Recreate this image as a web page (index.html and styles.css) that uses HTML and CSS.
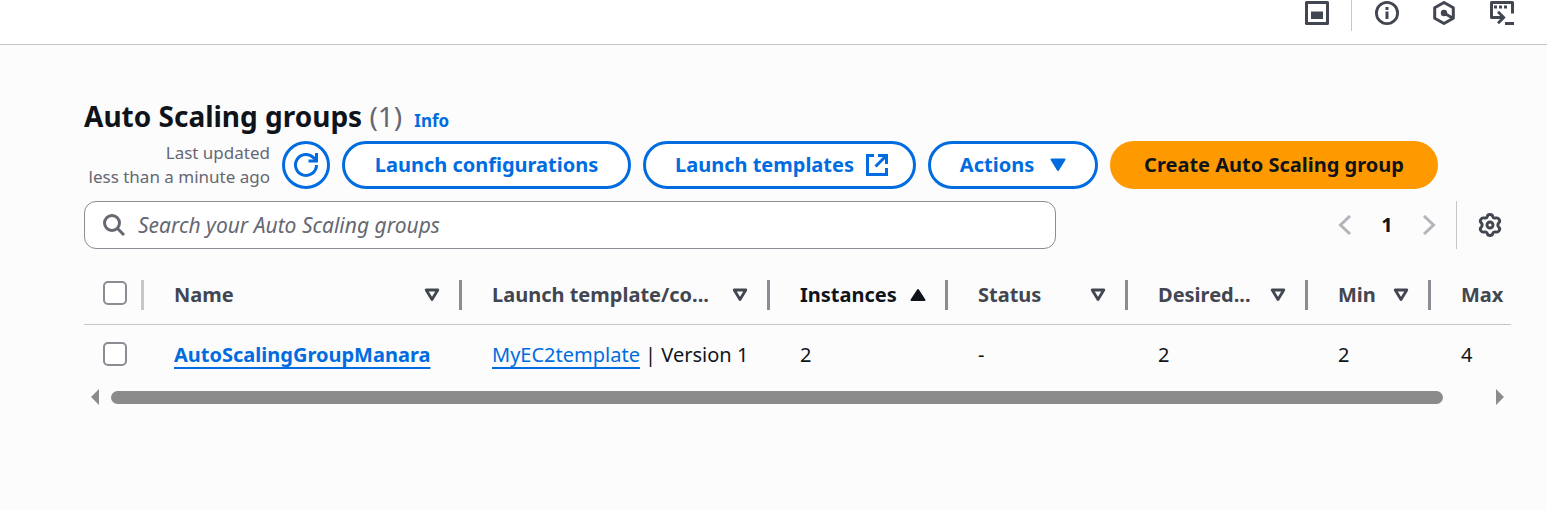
FILE: index.html
```html
<!DOCTYPE html>
<html lang="en">
<head>
<meta charset="utf-8">
<title>Auto Scaling groups</title>
<link rel="stylesheet" href="styles.css">
</head>
<body>
<header class="topbar">
  <button class="icon-btn panel-btn" aria-label="Split panel"><svg width="24" height="24" viewBox="0 0 24 24"><path d="M1.500 1.500h21v21h-21z" fill="none" stroke="currentColor" stroke-width="3" stroke-linejoin="round"/><path d="M6 10.500h12V18H6z" fill="currentColor"/></svg></button>
  <span class="topbar-divider"></span>
  <button class="icon-btn" aria-label="Information"><svg width="24" height="24" viewBox="0 0 24 24"><circle cx="12" cy="12" r="10.600" fill="none" stroke="currentColor" stroke-width="2.800"/><path d="M10.500 6h3v3h-3zM10.500 10.500h3V18h-3z" fill="currentColor"/></svg></button>
  <button class="icon-btn" aria-label="Diagnostics"><svg width="24" height="24" viewBox="0 0 24 24"><path d="M12 1.500l9.300 5.200v10.600L12 22.500l-9.300-5.200V6.700z" fill="none" stroke="currentColor" stroke-width="3" stroke-linejoin="round"/><circle cx="12" cy="12" r="3.200" fill="currentColor"/><path d="M12 12l8.500 5" stroke="currentColor" stroke-width="2.800"/></svg></button>
  <button class="icon-btn" aria-label="CloudShell"><svg width="26" height="24" viewBox="0 0 26 24"><path d="M6 16.500H2.500v-15h21V12.500" fill="none" stroke="currentColor" stroke-width="3" stroke-linejoin="round"/><path d="M5 4.500h3v3H5zM10 4.500h3v3h-3zM15 4.500h3v3h-3z" fill="currentColor"/><path d="M6 16.500h8M9 10.800l5.700 5.700L9 22.200" fill="none" stroke="currentColor" stroke-width="2.800"/><path d="M16 21h9v3h-9z" fill="currentColor"/></svg></button>
</header>

<main class="content">
  <div class="title-row">
    <h1 class="title">Auto Scaling groups <span class="count">(1)</span></h1>
    <a class="info" href="#">Info</a>
  </div>

  <div class="actions">
    <p class="updated">Last updated<br>less than a minute ago</p>
    <button class="btn btn-round" aria-label="Refresh"><svg width="26" height="26" viewBox="0 0 26 26" fill="none" stroke="currentColor" stroke-width="3"><path d="M23.500 13a10.500 10.500 0 1 1-3-7.400L23 8"/><path d="M23.500 1v8h-8"/></svg></button>
    <button class="btn btn-config">Launch configurations</button>
    <button class="btn btn-templates">Launch templates <svg width="22" height="22" viewBox="0 0 22 22" fill="none" stroke="currentColor" stroke-width="3"><path d="M8 1.500H1.500v19h19V14"/><path d="M12 1.500h8.500V10M20 2L9.500 12.500"/></svg></button>
    <button class="btn btn-menu">Actions <svg width="16" height="14" viewBox="0 0 16 14"><path d="M1.500 1.500h13L8 12z" fill="currentColor" stroke="currentColor" stroke-width="2" stroke-linejoin="round"/></svg></button>
    <button class="btn btn-primary">Create Auto Scaling group</button>
  </div>

  <div class="tools">
    <label class="search">
      <svg width="22" height="22" viewBox="0 0 22 22" fill="none" stroke="currentColor" stroke-width="3"><circle cx="9" cy="9" r="7.500"/><path d="M14.300 14.300l6.700 6.700"/></svg>
      <input class="search-input" type="search" placeholder="Search your Auto Scaling groups" aria-label="Search your Auto Scaling groups">
    </label>
    <nav class="pager" aria-label="Pagination">
      <button class="icon-btn page-arrow" aria-label="Previous page"><svg width="14" height="20" viewBox="0 0 14 20" fill="none" stroke="currentColor" stroke-width="3"><path d="M12 1l-9.500 9L12 19"/></svg></button>
      <button class="icon-btn page-number" aria-current="page">1</button>
      <button class="icon-btn page-arrow" aria-label="Next page"><svg width="14" height="20" viewBox="0 0 14 20" fill="none" stroke="currentColor" stroke-width="3"><path d="M2 1l9.500 9L2 19"/></svg></button>
    </nav>
    <div class="prefs">
      <button class="icon-btn" aria-label="Preferences"><svg width="24" height="24" viewBox="0 0 24 24" fill="none" stroke="currentColor" stroke-width="2.900" stroke-linejoin="round"><path d="M9.300 3.500Q9.600 1.500 12 1.500T14.700 3.500Q15.300 5.600 17.700 5Q20 4.400 21.200 6.500T20.700 9.800Q19 12 20.700 14.200Q22.400 15.400 21.200 17.500T17.700 19Q15.300 18.400 14.700 20.500Q14.400 22.500 12 22.500T9.300 20.500Q8.700 18.400 6.300 19Q4 19.600 2.800 17.500T3.300 14.200Q5 12 3.300 9.800Q1.600 8.600 2.800 6.500T6.300 5Q8.700 5.600 9.300 3.500z"/><circle cx="12" cy="12" r="3"/></svg></button>
    </div>
  </div>

  <table class="grid">
    <colgroup><col class="c-check"><col class="c-name"><col class="c-template"><col class="c-instances"><col class="c-status"><col class="c-desired"><col class="c-min"><col class="c-max"></colgroup>
    <thead>
      <tr>
        <th class="check"><div class="head"><input class="box" type="checkbox" aria-label="Select all groups"><span class="rule rule-light"></span></div></th>
        <th><div class="head"><span class="label">Name</span><svg class="sort" width="16" height="14" viewBox="0 0 16 14"><path d="M2.200 2h11.600L8 11.500z" fill="none" stroke="currentColor" stroke-width="2.800" stroke-linejoin="round"/></svg><span class="rule"></span></div></th>
        <th><div class="head"><span class="label">Launch template/co...</span><svg class="sort" width="16" height="14" viewBox="0 0 16 14"><path d="M2.200 2h11.600L8 11.500z" fill="none" stroke="currentColor" stroke-width="2.800" stroke-linejoin="round"/></svg><span class="rule"></span></div></th>
        <th class="sorted" aria-sort="ascending"><div class="head"><span class="label">Instances</span><svg class="sort" width="16" height="14" viewBox="0 0 16 14"><path d="M1.500 12h13L8 2z" fill="currentColor" stroke="currentColor" stroke-width="2" stroke-linejoin="round"/></svg><span class="rule"></span></div></th>
        <th><div class="head"><span class="label">Status</span><svg class="sort" width="16" height="14" viewBox="0 0 16 14"><path d="M2.200 2h11.600L8 11.500z" fill="none" stroke="currentColor" stroke-width="2.800" stroke-linejoin="round"/></svg><span class="rule"></span></div></th>
        <th><div class="head"><span class="label">Desired...</span><svg class="sort" width="16" height="14" viewBox="0 0 16 14"><path d="M2.200 2h11.600L8 11.500z" fill="none" stroke="currentColor" stroke-width="2.800" stroke-linejoin="round"/></svg><span class="rule"></span></div></th>
        <th><div class="head"><span class="label">Min</span><svg class="sort" width="16" height="14" viewBox="0 0 16 14"><path d="M2.200 2h11.600L8 11.500z" fill="none" stroke="currentColor" stroke-width="2.800" stroke-linejoin="round"/></svg><span class="rule"></span></div></th>
        <th><div class="head"><span class="label">Max</span></div></th>
      </tr>
    </thead>
    <tbody>
      <tr>
        <td class="check"><div class="head"><input class="box" type="checkbox" aria-label="Select AutoScalingGroupManara"></div></td>
        <td><a class="link link-strong" href="#">AutoScalingGroupManara</a></td>
        <td><a class="link" href="#">MyEC2template</a> | Version 1</td>
        <td>2</td>
        <td>-</td>
        <td>2</td>
        <td>2</td>
        <td>4</td>
      </tr>
    </tbody>
  </table>

  <div class="scrollbar">
    <svg width="8" height="16" viewBox="0 0 8 16"><path d="M8 0v16L0 8z" fill="currentColor"/></svg>
    <div class="track"><div class="thumb"></div></div>
    <svg width="8" height="16" viewBox="0 0 8 16"><path d="M0 0v16l8-8z" fill="currentColor"/></svg>
  </div>
</main>
</body>
</html>
```

FILE: styles.css
```css
* { box-sizing: border-box; }

body {
  margin: 0;
  background: #fcfcfd;
  color: #0f141a;
  font-family: "Noto Sans", "Open Sans", sans-serif;
  font-size: 20px;
  line-height: 30px;
}

button, input { font: inherit; }
svg { display: block; flex: none; }

.topbar {
  display: flex;
  justify-content: flex-end;
  align-items: flex-start;
  gap: 33px;
  height: 45px;
  padding-right: 32px;
  background: #fff;
  border-bottom: 1px solid #c6c6cd;
}

.icon-btn {
  display: flex;
  align-items: center;
  justify-content: center;
  padding: 0;
  border: 0;
  background: none;
  color: #424650;
}

.topbar .icon-btn { padding-top: 1px; }
.topbar .panel-btn { margin-right: -11px; }

.topbar-divider {
  width: 1px;
  height: 31px;
  margin-right: -10px;
  background: #c6c6cd;
}

.content { padding: 53px 36px 0 84px; }

.title-row {
  display: flex;
  align-items: baseline;
  gap: 12px;
  height: 43px;
}

.title {
  margin: 0;
  font-size: 28px;
  line-height: 36px;
  font-weight: 700;
}

.count { color: #656871; font-weight: 400; }

.info {
  color: #006ce0;
  font-size: 17px;
  font-weight: 700;
  text-decoration: none;
}

.actions {
  display: flex;
  align-items: center;
  gap: 12px;
}

.updated {
  min-width: 186px;
  margin: 0;
  color: #656871;
  font-size: 17px;
  line-height: 24px;
  text-align: right;
}

.btn {
  display: flex;
  align-items: center;
  justify-content: center;
  gap: 12px;
  height: 48px;
  padding: 0;
  border: 3px solid #006ce0;
  border-radius: 24px;
  background: #fff;
  color: #006ce0;
  font-weight: 700;
  white-space: nowrap;
}

.btn-round { width: 48px; }
.btn-config { width: 289px; }
.btn-templates { width: 273px; padding-left: 4px; }
.btn-menu { width: 170px; gap: 16px; }

.btn-primary {
  width: 328px;
  border-color: #ff9900;
  background: #ff9900;
  color: #0f141a;
}

.tools {
  display: flex;
  align-items: center;
  margin-top: 12px;
}

.search {
  display: flex;
  flex: 0 1 972px;
  align-items: center;
  gap: 13px;
  height: 48px;
  padding: 0 18px;
  border: 1px solid #8c8c94;
  border-radius: 12px;
  background: #fff;
  color: #656871;
}

.search-input {
  flex: 1;
  min-width: 0;
  padding: 0;
  border: 0;
  outline: 0;
  background: none;
  font-size: 21px;
}

.search-input::placeholder {
  color: #656871;
  font-style: italic;
  opacity: 1;
}

.pager {
  display: flex;
  align-items: center;
  margin-left: auto;
  padding-right: 20px;
}

.page-arrow { width: 14px; color: #b4b4bb; }

.page-number {
  width: 70px;
  color: #0f141a;
  font-weight: 700;
}

.prefs {
  display: flex;
  align-items: center;
  height: 48px;
  padding: 0 9px 0 21px;
  border-left: 1px solid #c6c6cd;
}

.grid {
  width: 100%;
  margin-top: 15px;
  table-layout: fixed;
  border-collapse: collapse;
}

.c-check { width: 60px; }
.c-name { width: 318px; }
.c-template { width: 308px; }
.c-instances { width: 178px; }
.c-status, .c-desired { width: 180px; }
.c-min { width: 123px; }

.grid th, .grid td {
  height: 60px;
  padding: 2px 0 0 30px;
  text-align: left;
  white-space: nowrap;
}

.grid th {
  padding-top: 3px;
  border-bottom: 1px solid #c6c6cd;
  color: #424650;
  font-weight: 700;
}

.grid th.sorted { color: #0f141a; }
.grid .check { padding-left: 19px; }
.grid td.check { padding-top: 0; }

.head {
  display: flex;
  align-items: center;
}

.label { flex: 1; min-width: 0; }
.sort { margin-right: 19px; }

.rule {
  width: 3px;
  height: 30px;
  background: #8c8c94;
}

.rule-light { margin-left: auto; background: #c6c6cd; }

.box {
  width: 24px;
  height: 24px;
  margin: 0;
  appearance: none;
  border: 2px solid #8c8c94;
  border-radius: 5px;
  background: #fff;
}

th .box { margin-bottom: 4px; }

.link {
  color: #006ce0;
  text-decoration: underline;
  text-decoration-thickness: 2px;
  text-decoration-skip-ink: none;
  text-underline-offset: 5px;
}

.link-strong { font-weight: 700; }

.scrollbar {
  display: flex;
  align-items: center;
  gap: 12px;
  padding: 5px 7px 0;
  color: #8b8b8b;
}

.track { flex: 1; }

.thumb {
  width: 97%;
  height: 13px;
  border-radius: 7px;
  background: #8b8b8b;
}
```
